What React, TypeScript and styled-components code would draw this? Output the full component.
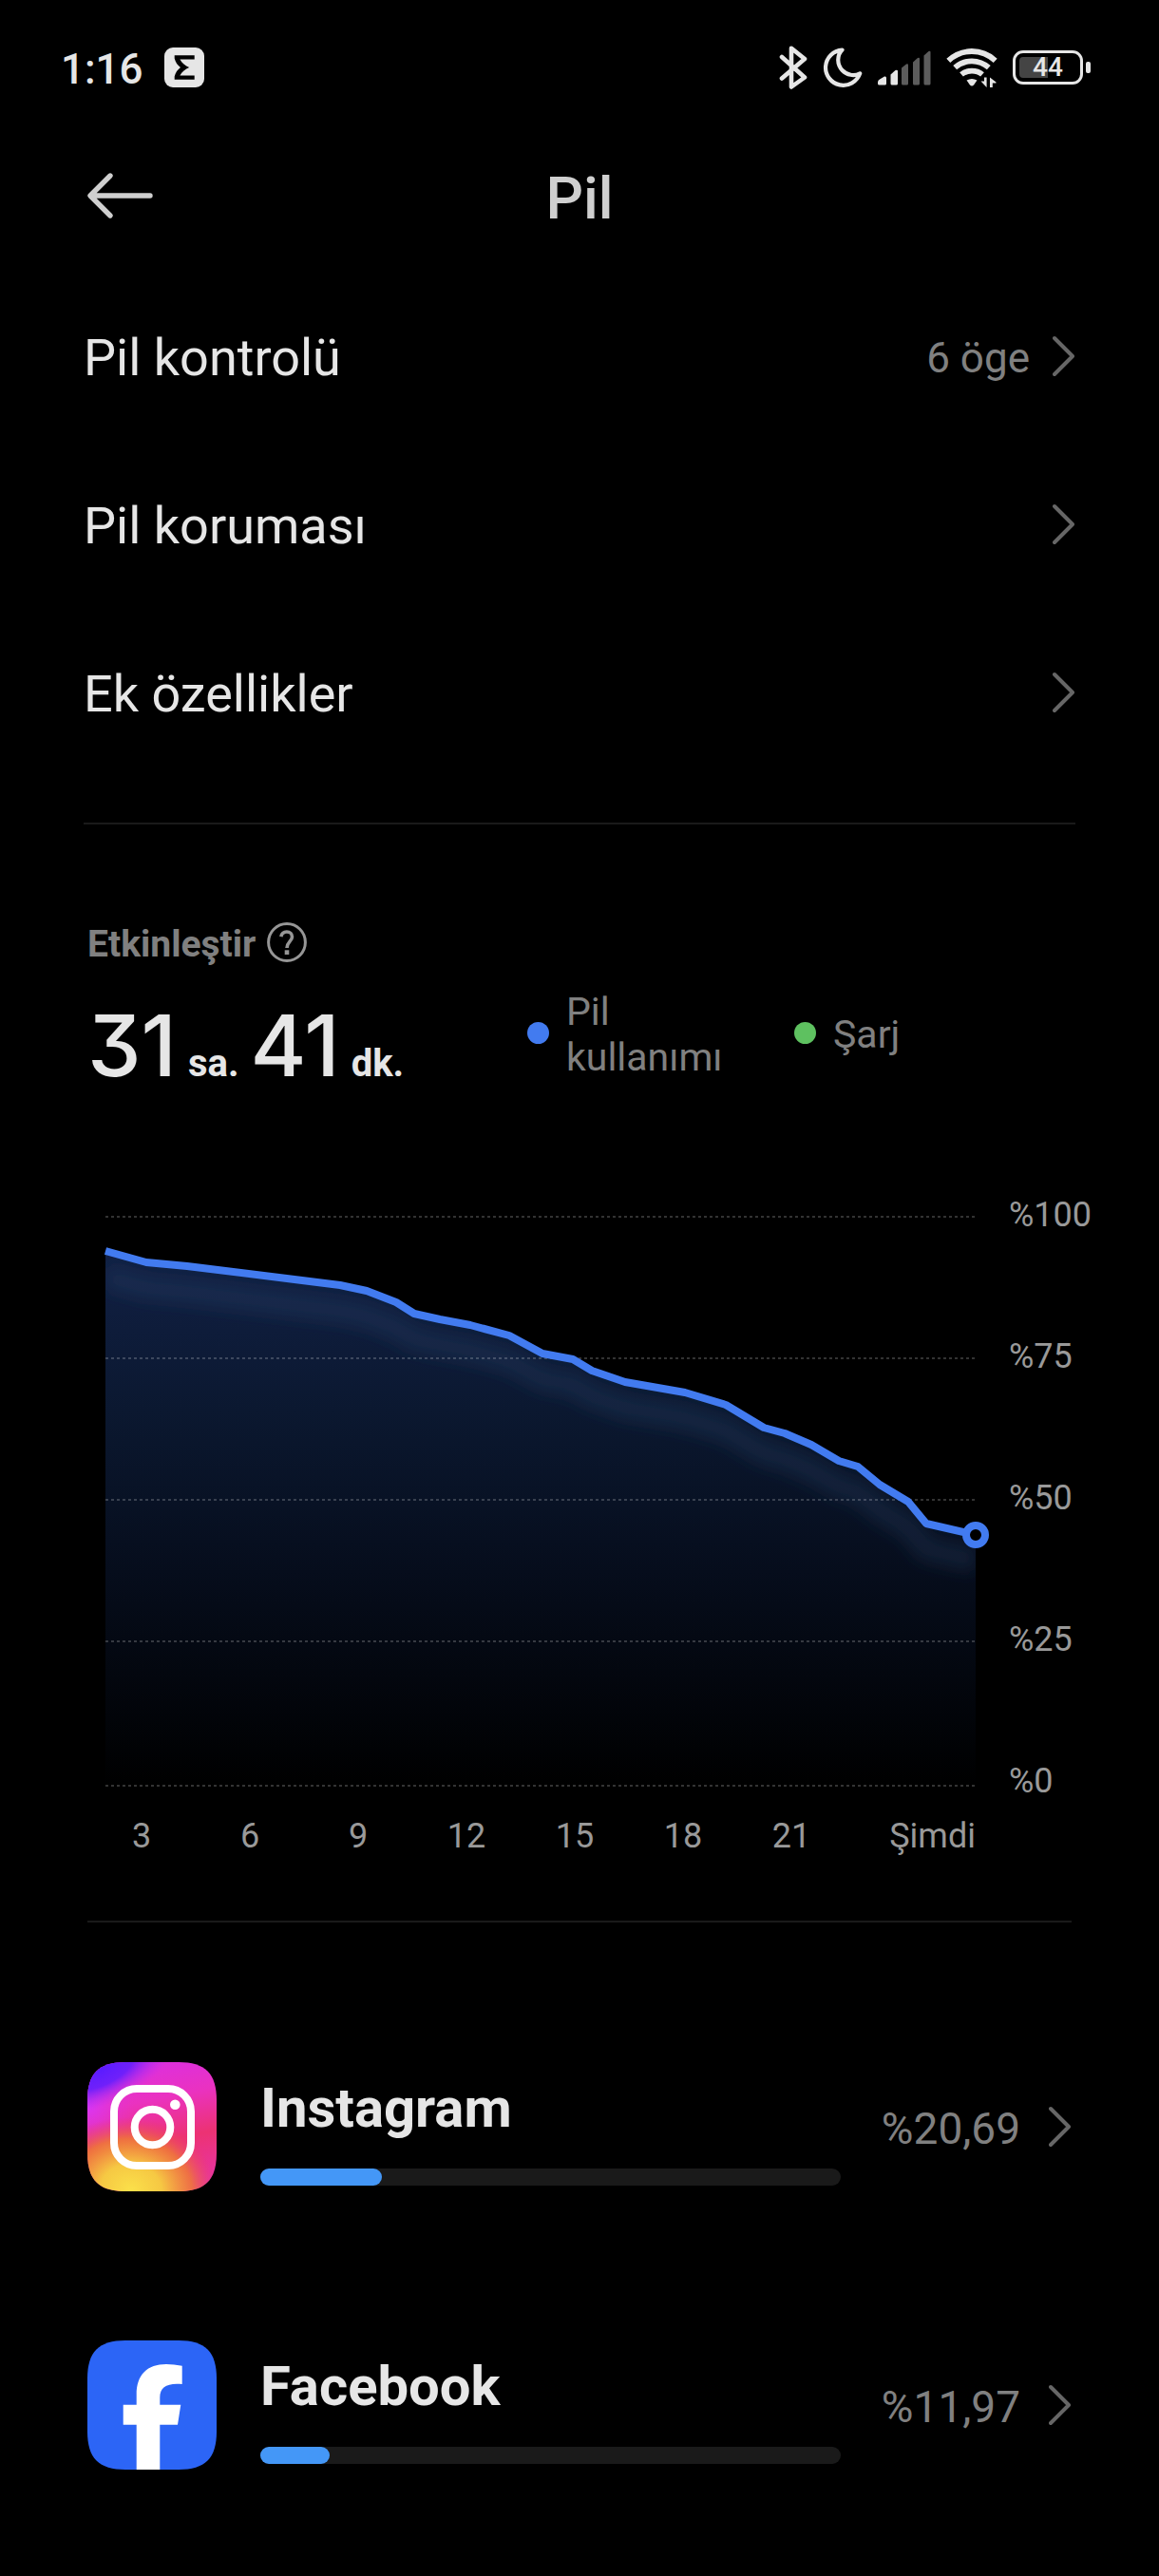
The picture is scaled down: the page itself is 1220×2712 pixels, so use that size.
import React from "react";
import styled, { createGlobalStyle } from "styled-components";

const color = {
  bg: "#000000",
  text: "#e6e6e6",
  title: "#cfcfcf",
  muted: "#808080",
  axis: "#999999",
  chevron: "#666666",
  line: "#1a1a1a",
  blue: "#427bf0",
  green: "#5ec160",
  bar: "#4497f7",
};

const GlobalStyle = createGlobalStyle`
  *, *::before, *::after { box-sizing: border-box; }
  body {
    margin: 0;
    background: ${color.bg};
    color: ${color.text};
    font-family: Roboto, "Noto Sans", sans-serif;
  }
  h1, h2, p, ul, ol { margin: 0; padding: 0; list-style: none; font-weight: inherit; }
  button { margin: 0; padding: 0; border: 0; background: none; color: inherit; font: inherit; text-align: left; cursor: pointer; }
  svg { display: block; flex: none; }
`;

const Page = styled.div`
  min-height: 100vh;
  padding-bottom: 112px;
`;

const StatusBar = styled.div`
  display: flex;
  align-items: center;
  justify-content: space-between;
  height: 134px;
  padding: 8px 72px 0 64px;
`;

const StatusLeft = styled.div`
  display: flex;
  align-items: center;
  gap: 22px;
`;

const StatusIcons = styled.div`
  display: flex;
  align-items: center;
  gap: 16px;
`;

const Clock = styled.time`
  padding-top: 4px;
  font-size: 44px;
  line-height: 52px;
  font-weight: 500;
`;

const BatteryWrap = styled.div`
  display: flex;
  align-items: center;
  gap: 3px;
`;

const BatteryBody = styled.div`
  position: relative;
  display: flex;
  align-items: center;
  justify-content: center;
  width: 74px;
  height: 36px;
  border: 3px solid ${color.text};
  border-radius: 11px;
  font-size: 28px;
  line-height: 30px;
  font-weight: 500;
`;

const BatteryLevel = styled.span`
  position: absolute;
  left: 4px;
  top: 4px;
  bottom: 4px;
  border-radius: 4px 0 0 4px;
  background: #444444;
`;

const BatteryText = styled.span`
  position: relative;
`;

const BatteryTip = styled.span`
  width: 5px;
  height: 12px;
  border-radius: 2px;
  background: ${color.text};
`;

const Header = styled.header`
  display: grid;
  grid-template-columns: 72px 1fr 72px;
  align-items: center;
  height: 144px;
  padding: 0 90px;
`;

const IconButton = styled.button`
  display: flex;
  align-items: center;
`;

const Title = styled.h1`
  padding-top: 6px;
  font-size: 62px;
  line-height: 72px;
  font-weight: 500;
  text-align: center;
  color: ${color.title};
`;

const Menu = styled.ul`
  padding: 8px 88px 0;
`;

const MenuRow = styled.button`
  display: flex;
  align-items: center;
  gap: 24px;
  width: 100%;
  height: 177px;
`;

const MenuLabel = styled.span`
  flex: 1;
  padding-top: 4px;
  font-size: 54px;
  line-height: 64px;
`;

const Value = styled.span<{ $size: number }>`
  padding-top: 4px;
  font-size: ${(p) => p.$size}px;
  line-height: 52px;
  color: ${color.muted};
`;

const Divider = styled.hr<{ $inset: number; $top: number }>`
  height: 2px;
  margin: ${(p) => p.$top}px ${(p) => p.$inset}px 0;
  border: 0;
  background: ${color.line};
`;

const Summary = styled.section`
  display: grid;
  grid-template-columns: 463fr 573fr;
  align-items: end;
  padding: 103px 92px 0;
`;

const SummaryHead = styled.div`
  display: flex;
  align-items: center;
  gap: 12px;
  height: 42px;
`;

const SummaryLabel = styled.h2`
  padding-top: 4px;
  font-size: 39px;
  line-height: 44px;
  font-weight: 700;
  color: ${color.muted};
`;

const Duration = styled.p`
  display: flex;
  align-items: baseline;
  gap: 12px;
  margin-top: 38px;
  font-family: Inter, Roboto, sans-serif;
  font-feature-settings: "cv09" 1;
  font-size: 90px;
  line-height: 100px;
  font-weight: 500;
  white-space: nowrap;
`;

const Unit = styled.span`
  font-family: Roboto, "Noto Sans", sans-serif;
  font-size: 40px;
  line-height: 48px;
  font-weight: 700;
`;

const Legend = styled.ul`
  display: grid;
  grid-template-columns: 1fr 1fr;
  gap: 40px;
  padding: 0 51px 14px 0;
`;

const LegendItem = styled.li`
  display: flex;
  align-items: center;
  gap: 18px;
`;

const Dot = styled.span<{ $color: string }>`
  flex: none;
  width: 23px;
  height: 23px;
  border-radius: 50%;
  background: ${(p) => p.$color};
`;

const LegendText = styled.span`
  padding-top: 4px;
  font-size: 41px;
  line-height: 48px;
  color: ${color.muted};
`;

const ChartSection = styled.section`
  display: grid;
  grid-template-columns: 1fr 86px;
  gap: 35px;
  align-items: start;
  padding: 109px 72px 0 92px;
`;

const Plot = styled.div`
  padding-top: 20px;
`;

const PlotArea = styled.div`
  padding-left: 19px;

  svg {
    width: 100%;
    height: auto;
    overflow: visible;
  }
`;

const YAxis = styled.ul`
  display: flex;
  flex-direction: column;
  gap: 111px;
`;

const XAxis = styled.ul`
  display: grid;
  grid-template-columns: repeat(7, 114fr) 137fr;
  margin-top: 34px;
`;

const Tick = styled.li<{ $align?: string }>`
  font-size: 36px;
  line-height: 38px;
  color: ${color.axis};
  text-align: ${(p) => p.$align ?? "left"};
  white-space: nowrap;
`;

const Apps = styled.ul`
  display: grid;
  gap: 157px;
  padding: 147px 92px 0;
`;

const AppRow = styled.button`
  display: flex;
  align-items: center;
  width: 100%;
`;

const AppInfo = styled.span`
  display: flex;
  flex: 1;
  flex-direction: column;
  gap: 30px;
  margin: 0 43px 0 46px;
  padding-top: 8px;
`;

const AppName = styled.span`
  font-size: 58px;
  line-height: 68px;
  font-weight: 700;
`;

const Track = styled.span`
  display: block;
  height: 18px;
  border-radius: 9px;
  background: ${color.line};
`;

const Fill = styled.span`
  display: block;
  height: 100%;
  border-radius: 9px;
  background: ${color.bar};
`;

const Trailing = styled.span`
  display: flex;
  align-items: center;
  gap: 30px;
`;

const Chevron = () => (
  <svg width="24" height="44" viewBox="0 0 24 44" fill="none" stroke={color.chevron} strokeWidth="4" strokeLinecap="round" strokeLinejoin="round" aria-hidden="true">
    <path d="M2 3 21 22 2 41" />
  </svg>
);

const SigmaIcon = () => (
  <svg width="42" height="42" viewBox="0 0 42 42" aria-hidden="true">
    <rect width="42" height="42" rx="9" fill={color.text} />
    <path d="M10.7 8.3H31.7V12.4H16.4C18.5 16.5 22 19 26.2 21C22 23 18.5 25.5 16.4 29.6H31.7V33.8H10.7V30.5C11.6 26.5 14 23.3 17 21C14 18.7 11.6 15.5 10.7 11.5Z" fill="#000" />
  </svg>
);

const BluetoothIcon = () => (
  <svg width="30" height="46" viewBox="0 0 30 46" fill="none" stroke={color.text} strokeWidth="4.6" strokeLinecap="round" strokeLinejoin="round" aria-hidden="true">
    <path d="M3 12 27 33.5 13 43.5V2.8L27 14 3 34.5" />
  </svg>
);

const MoonIcon = () => (
  <svg width="42" height="42" viewBox="0 0 42 42" fill="none" stroke={color.text} strokeWidth="4.2" strokeLinejoin="round" aria-hidden="true">
    <path d="M20.5 2.6A18.6 18.6 0 1 0 39.2 27.3C33 30.5 25.5 29.2 20.6 24C15 18 14.6 8.5 20.5 2.6Z" />
  </svg>
);

const SignalIcon = () => (
  <svg width="56" height="38" viewBox="0 0 56 38" aria-hidden="true">
    <path d="M0 34.5Q0 32.5 2 31.5L7 28.6Q9 28 9 30V36Q9 37.5 7.5 37.5H1.5Q0 37.5 0 36Z" fill={color.text} />
    <path d="M13.5 26.5 18.5 22Q21 21 21 23V36Q21 37.5 19.5 37.5H15Q13.5 37.5 13.5 36Z" fill={color.text} />
    <g fill="#5c5c5c">
      <path d="M25 19.5 30 15.5Q32 14.5 32 16.5V36Q32 37.5 30.5 37.5H26.5Q25 37.5 25 36Z" />
      <path d="M37 13.5 42 9Q44 8 44 10V36Q44 37.5 42.5 37.5H38.5Q37 37.5 37 36Z" />
      <path d="M48.5 6.5 53.5 2Q55.5 1 55.5 3V36Q55.5 37.5 54 37.5H50Q48.5 37.5 48.5 36Z" />
    </g>
  </svg>
);

const WifiIcon = () => (
  <svg width="54" height="42" viewBox="0 0 54 42" fill="none" stroke={color.text} strokeWidth="5.8" aria-hidden="true">
    <path d="M2.3 13.8Q13 4 27 4T51.7 13.8" />
    <path d="M9.2 21.2Q17 14.3 27 14.3T44.8 21.2" />
    <path d="M16 28.4Q20.5 24.6 27 24.6T38 28.4" />
    <path d="M21.5 34.5Q27 31.5 32.5 34.5L29 39.5Q27 41.5 25 39.5Z" fill={color.text} stroke="none" />
    <path d="M42.6 31.5V42L36.5 35.5H40V31.5ZM46 31.5 52.5 36.5V37.5H48.8V42H46Z" fill={color.text} stroke="none" />
  </svg>
);

const BackIcon = () => (
  <svg width="72" height="50" viewBox="0 0 72 50" fill="none" stroke={color.title} strokeWidth="5.4" strokeLinecap="round" strokeLinejoin="round" aria-hidden="true">
    <path d="M26 4 5 25 26 46M6 25H68" />
  </svg>
);

const HelpIcon = () => (
  <svg width="42" height="42" viewBox="0 0 42 42" fill="none" stroke="#969696" strokeWidth="3" aria-hidden="true">
    <circle cx="21" cy="21" r="19.4" />
    <path d="M14.8 15.2C15.5 11.8 17.8 10 20.8 10C24.3 10 26.5 12.2 26.5 15.2C26.5 20 21 20.5 21 27" strokeWidth="3.6" />
    <path d="M21 29.3V34" strokeWidth="4.6" />
  </svg>
);

const SQUIRCLE = "M68 0H96C124 0 136 12 136 40V96C136 124 124 136 96 136H40C12 136 0 124 0 96V40C0 12 12 0 40 0Z";

const InstagramIcon = () => (
  <svg width="136" height="136" viewBox="0 0 136 136" aria-hidden="true">
    <defs>
      <clipPath id="ig-shape"><path d={SQUIRCLE} /></clipPath>
      <linearGradient id="ig-base" x1="0.4" y1="0" x2="0.6" y2="1">
        <stop offset="0" stopColor="#dc2fe0" />
        <stop offset="0.3" stopColor="#ea32c0" />
        <stop offset="0.62" stopColor="#ec3273" />
        <stop offset="1" stopColor="#e834a8" />
      </linearGradient>
      <radialGradient id="ig-magenta" gradientUnits="userSpaceOnUse" cx="0" cy="46" r="50">
        <stop offset="0" stopColor="#d936f5" />
        <stop offset="1" stopColor="#e234d0" stopOpacity="0" />
      </radialGradient>
      <radialGradient id="ig-purple" gradientUnits="userSpaceOnUse" cx="0" cy="0" r="1" gradientTransform="translate(12 8) rotate(-24) scale(86 38)">
        <stop offset="0" stopColor="#5a1cff" />
        <stop offset="0.45" stopColor="#6f20fa" />
        <stop offset="1" stopColor="#c030f0" stopOpacity="0" />
      </radialGradient>
      <radialGradient id="ig-yellow" gradientUnits="userSpaceOnUse" cx="0" cy="0" r="1" gradientTransform="translate(46 134) rotate(6) scale(92 76)">
        <stop offset="0" stopColor="#fbe04a" />
        <stop offset="0.35" stopColor="#f6c843" />
        <stop offset="0.7" stopColor="#ef7a35" stopOpacity="0.85" />
        <stop offset="1" stopColor="#ec3a60" stopOpacity="0" />
      </radialGradient>
    </defs>
    <g clipPath="url(#ig-shape)">
      <rect width="136" height="136" fill="url(#ig-base)" />
      <rect width="136" height="136" fill="url(#ig-magenta)" />
      <rect width="136" height="136" fill="url(#ig-purple)" />
      <rect width="136" height="136" fill="url(#ig-yellow)" />
    </g>
    <g fill="none" stroke="#fff" strokeWidth="8">
      <rect x="28" y="28" width="81" height="81" rx="24" />
      <circle cx="68.5" cy="68.5" r="18.8" />
    </g>
    <circle cx="92.3" cy="44.7" r="5.3" fill="#fff" />
  </svg>
);

const FacebookIcon = () => (
  <svg width="136" height="136" viewBox="0 0 136 136" aria-hidden="true">
    <path d={SQUIRCLE} fill="#2c65f6" />
    <path d="M99.7 26.7V46C84 44.5 76.3 49 76.3 60V67.7H98.3L95 88.7H76.3V136H51.7V88.7H37.7V67.7H51.7V57C51.7 36 63 25 83 25Q91 25 99.7 26.7Z" fill="#fff" />
  </svg>
);

const LEVELS: [number, number][] = [
  [0, 37], [43, 49], [86, 53], [207, 68], [247, 73], [275, 79], [306, 91], [325, 103], [352, 109], [384, 115],
  [425, 126], [460, 145], [492, 151], [512, 163], [547, 175], [610, 186], [653, 199], [693, 223], [715, 229],
  [743, 241], [772, 258], [792, 264], [815, 283], [845, 301], [864, 324], [916, 336],
];
const GRID = [1, 150, 299, 448, 600];
const linePath = "M" + LEVELS.map(([x, y]) => `${x} ${y}`).join("L");
const areaPath = `${linePath}V600H0Z`;

const BatteryChart = () => (
  <svg viewBox="0 0 916 600" role="img" aria-label="Pil kullanımı">
    <defs>
      <linearGradient id="area" gradientUnits="userSpaceOnUse" x1="0" y1="37" x2="0" y2="600">
        <stop offset="0" stopColor="#112044" />
        <stop offset="0.3" stopColor="#0b1830" />
        <stop offset="0.6" stopColor="#060d1c" />
        <stop offset="1" stopColor="#000000" />
      </linearGradient>
      <clipPath id="area-clip"><path d={areaPath} /></clipPath>
      <filter id="soft" x="-10%" y="-20%" width="120%" height="150%">
        <feGaussianBlur stdDeviation="9" />
      </filter>
    </defs>
    <path d={areaPath} fill="url(#area)" />
    <g clipPath="url(#area-clip)">
      <path d={linePath} transform="translate(0 27)" fill="none" stroke="#2a4a72" strokeOpacity="0.27" strokeWidth="24" filter="url(#soft)" />
    </g>
    {GRID.map((y) => (
      <path key={y} d={`M0 ${y}H916`} stroke="#ffffff" strokeOpacity="0.2" strokeWidth="2" strokeDasharray="3 3" />
    ))}
    <path d={linePath} fill="none" stroke={color.blue} strokeWidth="8" strokeLinejoin="round" />
    <circle cx="916" cy="336" r="10" fill="#000" stroke={color.blue} strokeWidth="8" />
  </svg>
);

const MENU = [
  { label: "Pil kontrolü", value: "6 öge" },
  { label: "Pil koruması" },
  { label: "Ek özellikler" },
];

const APPS = [
  { name: "Instagram", share: "%20,69", width: 21, Icon: InstagramIcon },
  { name: "Facebook", share: "%11,97", width: 12, Icon: FacebookIcon },
];

export default function App() {
  return (
    <Page>
      <GlobalStyle />
      <StatusBar>
        <StatusLeft>
          <Clock>1:16</Clock>
          <SigmaIcon />
        </StatusLeft>
        <StatusIcons>
          <BluetoothIcon />
          <MoonIcon />
          <SignalIcon />
          <WifiIcon />
          <BatteryWrap>
            <BatteryBody>
              <BatteryLevel style={{ width: "44%" }} />
              <BatteryText>44</BatteryText>
            </BatteryBody>
            <BatteryTip />
          </BatteryWrap>
        </StatusIcons>
      </StatusBar>

      <Header>
        <IconButton type="button" aria-label="Geri"><BackIcon /></IconButton>
        <Title>Pil</Title>
      </Header>

      <main>
        <Menu>
          {MENU.map(({ label, value }) => (
            <li key={label}>
              <MenuRow type="button">
                <MenuLabel>{label}</MenuLabel>
                {value && <Value $size={44}>{value}</Value>}
                <Chevron />
              </MenuRow>
            </li>
          ))}
        </Menu>
        <Divider $inset={88} $top={49} />

        <Summary>
          <div>
            <SummaryHead>
              <SummaryLabel>Etkinleştir</SummaryLabel>
              <IconButton type="button" aria-label="Yardım"><HelpIcon /></IconButton>
            </SummaryHead>
            <Duration>
              <span>31</span>
              <Unit>sa.</Unit>
              <span>41</span>
              <Unit>dk.</Unit>
            </Duration>
          </div>
          <Legend>
            <LegendItem>
              <Dot $color={color.blue} />
              <LegendText>Pil kullanımı</LegendText>
            </LegendItem>
            <LegendItem>
              <Dot $color={color.green} />
              <LegendText>Şarj</LegendText>
            </LegendItem>
          </Legend>
        </Summary>

        <ChartSection>
          <Plot>
            <PlotArea><BatteryChart /></PlotArea>
            <XAxis>
              {["3", "6", "9", "12", "15", "18", "21"].map((hour) => (
                <Tick key={hour} $align="center">{hour}</Tick>
              ))}
              <Tick $align="right">Şimdi</Tick>
            </XAxis>
          </Plot>
          <YAxis>
            {["%100", "%75", "%50", "%25", "%0"].map((level) => (
              <Tick key={level}>{level}</Tick>
            ))}
          </YAxis>
        </ChartSection>
        <Divider $inset={92} $top={70} />

        <Apps>
          {APPS.map(({ name, share, width, Icon }) => (
            <li key={name}>
              <AppRow type="button">
                <Icon />
                <AppInfo>
                  <AppName>{name}</AppName>
                  <Track><Fill style={{ width: `${width}%` }} /></Track>
                </AppInfo>
                <Trailing>
                  <Value $size={46}>{share}</Value>
                  <Chevron />
                </Trailing>
              </AppRow>
            </li>
          ))}
        </Apps>
      </main>
    </Page>
  );
}
